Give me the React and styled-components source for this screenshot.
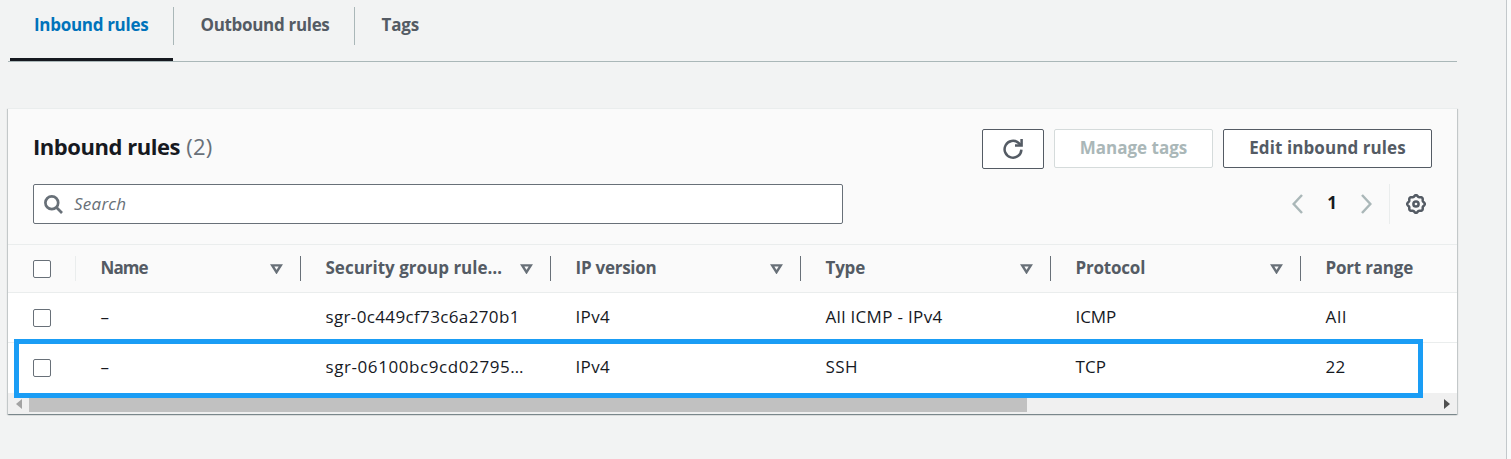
import React from "react";
import styled, { createGlobalStyle } from "styled-components";

const GlobalStyle = createGlobalStyle`
  *, *::before, *::after { box-sizing: border-box; }
  body {
    margin: 0;
    background: #f9fafa;
    font-family: "Open Sans", "Noto Sans", sans-serif;
    font-size: 17px;
    line-height: 24px;
    color: #16191f;
    overflow: hidden;
  }
`;

const Page = styled.div`
  width: 1507px;
  height: 459px;
  padding-left: 8px;
  background: #f2f3f3;
  border-right: 1px solid #c3c8cb;
`;

const Content = styled.main`
  width: 1449px;
`;

const Tabs = styled.nav`
  display: flex;
  height: 62px;
  padding-left: 2px;
  border-bottom: 1px solid #aab7b8;
`;

const Tab = styled.div`
  display: flex;
  width: ${(p) => p.$width}px;
  padding-top: 7px;
  border-bottom: 3px solid ${(p) => (p.$active ? "#16191f" : "transparent")};
  color: ${(p) => (p.$active ? "#0073bb" : "#545b64")};
  font-weight: 700;
`;

const TabLabel = styled.span`
  flex: 1;
  height: 38px;
  padding-left: ${(p) => p.$indent}px;
  line-height: 36px;
  letter-spacing: ${(p) => p.$tracking || 0}px;
  white-space: nowrap;
`;

const TabDivider = styled.span`
  width: 1px;
  height: 38px;
  margin-right: -1px;
  background: #aab7b8;
`;

const Panel = styled.section`
  position: relative;
  height: 306px;
  margin-top: 46px;
  background: #fff;
  border-top: 1px solid #eaeded;
  box-shadow: 0 1px 1px 0 rgba(0, 28, 36, 0.3), 1px 1px 1px 0 rgba(0, 28, 36, 0.15),
    -1px 1px 1px 0 rgba(0, 28, 36, 0.15);
`;

const PanelHeader = styled.header`
  height: 136px;
  padding: 20px 25px 0;
  background: #fafafa;
  border-bottom: 1px solid #eaeded;
`;

const TitleRow = styled.div`
  display: flex;
  justify-content: space-between;
  height: 40px;
`;

const Title = styled.h2`
  margin: 0;
  font-size: 22px;
  line-height: 34px;
  font-weight: 700;
  letter-spacing: -0.45px;
`;

const Counter = styled.span`
  font-weight: 400;
  letter-spacing: 0.1px;
  color: #687078;
  margin-left: 1px;
`;

const Actions = styled.div`
  display: flex;
  align-items: flex-start;
  gap: 10px;
`;

const Button = styled.button`
  display: flex;
  align-items: center;
  justify-content: center;
  width: ${(p) => p.$width}px;
  height: ${(p) => p.$height || 39}px;
  padding: 0 0 ${(p) => (p.$height ? 1 : 2)}px;
  border: 1px solid ${(p) => (p.disabled ? "#d5dbdb" : "#545b64")};
  border-radius: 2px;
  background: #fff;
  color: ${(p) => (p.disabled ? "#aab7b8" : "#545b64")};
  font: 700 17px "Open Sans", sans-serif;
  letter-spacing: ${(p) => (p.disabled ? 0 : 0.08)}px;
  white-space: nowrap;
`;

const ToolRow = styled.div`
  display: flex;
  justify-content: space-between;
  align-items: center;
  margin-top: 15px;
`;

const SearchBox = styled.label`
  display: flex;
  align-items: center;
  gap: 11px;
  width: 810px;
  height: 40px;
  padding-left: 10px;
  border: 1px solid #687078;
  border-radius: 2px;
  background: #fff;
  color: #687078;
  font-style: italic;
  letter-spacing: 0.25px;
`;

const Pager = styled.div`
  display: flex;
  align-items: center;
  height: 40px;
  padding-right: 6px;
`;

const PageNumber = styled.span`
  width: 58px;
  padding-bottom: 2px;
  text-align: center;
  font-weight: 700;
`;

const PagerDivider = styled.span`
  width: 1px;
  height: 40px;
  margin: 0 16px 0 17px;
  background: #eaeded;
`;

const GridRow = styled.div`
  display: grid;
  grid-template-columns: 67px 225px repeat(4, 250px) 157px;
  align-items: center;
  height: ${(p) => p.$height}px;
  background: ${(p) => (p.$head ? "#fafafa" : "#fff")};
  border-bottom: 1px solid ${(p) => (p.$last ? "transparent" : "#eaeded")};
`;

const CheckCell = styled.div`
  display: flex;
  align-items: center;
  height: 25px;
  padding: 1px 0 0 25px;
`;

const Checkbox = styled.span`
  width: 18px;
  height: 18px;
  border: 1px solid #687078;
  border-radius: 2px;
  background: #fff;
`;

const HeadCell = styled.div`
  display: flex;
  align-items: center;
  justify-content: space-between;
  height: 25px;
  padding: 0 17.5px 0 24.5px;
  border-left: 1px solid ${(p) => (p.$soft ? "#eaeded" : "#687078")};
  color: #545b64;
  font-weight: 700;
`;

const HeadText = styled.span`
  padding-bottom: 1px;
  letter-spacing: ${(p) => p.$tracking || 0}px;
  white-space: nowrap;
`;

const Cell = styled.div`
  padding: 0 0 1px 25.5px;
  white-space: nowrap;
  letter-spacing: ${(p) => p.$tracking || 0}px;
`;

const Scrollbar = styled.div`
  display: flex;
  align-items: center;
  height: 21px;
  padding: 1px 7px 0 8px;
  background: #f0f0f0;
`;

const Thumb = styled.span`
  width: 998px;
  height: 15px;
  margin: 0 auto 0 7px;
  background: #c1c1c1;
`;

const Highlight = styled.div`
  position: absolute;
  left: 6px;
  top: 230px;
  width: 1409px;
  height: 59px;
  border: 5px solid #1a9df5;
  pointer-events: none;
`;

const Icon = styled.svg`
  display: block;
  flex: none;
  fill: none;
  stroke: ${(p) => p.$color || "currentColor"};
  stroke-width: ${(p) => p.$weight || 2.5};
`;

const RefreshIcon = () => (
  <Icon width="20" height="20" viewBox="0 0 20 20">
    <path d="M18.4 10.6A8.4 8.4 0 1 1 15.6 4L18 6.2" />
    <path d="M18.6 0V6.6H12" />
  </Icon>
);

const SearchIcon = () => (
  <Icon width="19" height="19" viewBox="0 0 19 19" $weight={2.7}>
    <circle cx="7.8" cy="7.8" r="6.4" />
    <path d="M12.3 12.3L18 18" />
  </Icon>
);

const Chevron = ({ right }) => (
  <Icon width="11" height="20" viewBox="0 0 11 20" $color="#aab7b8" $weight={2.5}>
    <path d={right ? "M1 1L9.4 10L1 19" : "M10 1L1.6 10L10 19"} />
  </Icon>
);

const gearOutline = Array.from({ length: 96 }, (_, i) => {
  const angle = (i / 96) * Math.PI * 2;
  const radius = 8.1 + 0.7 * Math.cos(8 * angle);
  return `${(radius * Math.cos(angle)).toFixed(2)},${(radius * Math.sin(angle)).toFixed(2)}`;
}).join(" ");

const GearIcon = () => (
  <Icon width="20" height="20" viewBox="-10 -10 20 20" $color="#545b64" $weight={2.5}>
    <polygon points={gearOutline} />
    <circle r="2.6" />
  </Icon>
);

const SortIcon = () => (
  <Icon width="13" height="11" viewBox="0 0 13 11" $color="#687078" $weight={2.4}>
    <path d="M2.2 2.4H10.8L6.5 9.2Z" />
  </Icon>
);

const ScrollArrow = styled.svg`
  display: block;
  flex: none;
  fill: ${(p) => (p.$enabled ? "#505050" : "#a3a3a3")};
`;

const columns = [
  { label: "Name", tracking: -0.9 },
  { label: "Security group rule…", tracking: 0 },
  { label: "IP version", tracking: -0.25 },
  { label: "Type", tracking: -0.2 },
  { label: "Protocol", tracking: -0.2 },
  { label: "Port range", tracking: -0.2 },
];

const rules = [
  [["–"], ["sgr-0c449cf73c6a270b1", 0.36], ["IPv4", 0.35], ["All ICMP - IPv4", 0.32], ["ICMP", -0.1], ["All", 0.7]],
  [["–"], ["sgr-06100bc9cd02795…", 0.58], ["IPv4", 0.35], ["SSH", 0.4], ["TCP", 0.1], ["22", 0.4]],
];

export default function App() {
  return (
    <>
      <GlobalStyle />
      <Page>
        <Content>
          <Tabs>
            <Tab $active $width={163}>
              <TabLabel $indent={24} $tracking={-0.3}>Inbound rules</TabLabel>
              <TabDivider />
            </Tab>
            <Tab $width={181}>
              <TabLabel $indent={27.5} $tracking={-0.32}>Outbound rules</TabLabel>
              <TabDivider />
            </Tab>
            <Tab $width={100}>
              <TabLabel $indent={27.5} $tracking={-0.15}>Tags</TabLabel>
            </Tab>
          </Tabs>
          <Panel>
            <PanelHeader>
              <TitleRow>
                <Title>
                  Inbound rules <Counter>(2)</Counter>
                </Title>
                <Actions>
                  <Button $width={62} $height={40} aria-label="Refresh">
                    <RefreshIcon />
                  </Button>
                  <Button $width={159} disabled>Manage tags</Button>
                  <Button $width={209}>Edit inbound rules</Button>
                </Actions>
              </TitleRow>
              <ToolRow>
                <SearchBox>
                  <SearchIcon />
                  Search
                </SearchBox>
                <Pager>
                  <Chevron />
                  <PageNumber>1</PageNumber>
                  <Chevron right />
                  <PagerDivider />
                  <GearIcon />
                </Pager>
              </ToolRow>
            </PanelHeader>
            <GridRow $head $height={48}>
              <CheckCell>
                <Checkbox />
              </CheckCell>
              {columns.map((col, i) => (
                <HeadCell key={col.label} $soft={i === 0}>
                  <HeadText $tracking={col.tracking}>{col.label}</HeadText>
                  {i < 5 && <SortIcon />}
                </HeadCell>
              ))}
            </GridRow>
            {rules.map((rule, r) => (
              <GridRow key={r} $height={50} $last={r === rules.length - 1}>
                <CheckCell>
                  <Checkbox />
                </CheckCell>
                {rule.map(([text, tracking], i) => (
                  <Cell key={i} $tracking={tracking}>{text}</Cell>
                ))}
              </GridRow>
            ))}
            <Scrollbar>
              <ScrollArrow width="6" height="10" viewBox="0 0 6 10">
                <path d="M6 0L0 5L6 10Z" />
              </ScrollArrow>
              <Thumb />
              <ScrollArrow $enabled width="6" height="10" viewBox="0 0 6 10">
                <path d="M0 0L6 5L0 10Z" />
              </ScrollArrow>
            </Scrollbar>
            <Highlight />
          </Panel>
        </Content>
      </Page>
    </>
  );
}
